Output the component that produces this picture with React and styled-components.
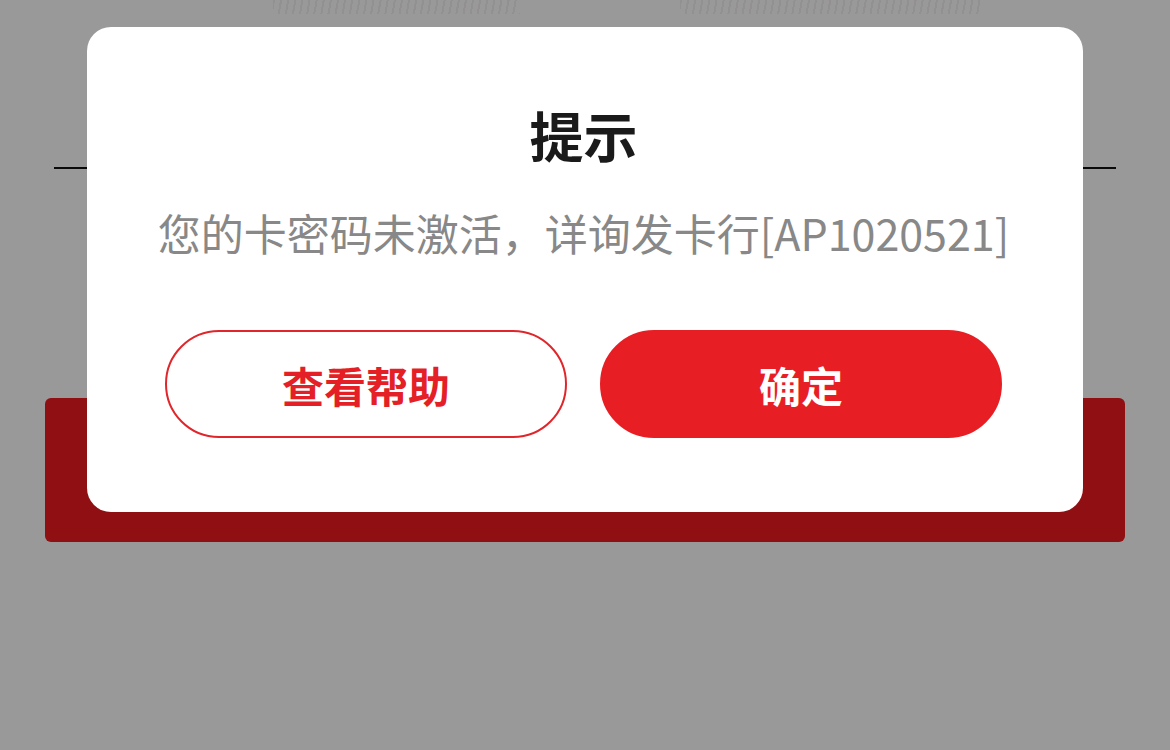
import React from 'react';
import styled, { createGlobalStyle } from 'styled-components';

const GlobalStyle = createGlobalStyle`
  html, body {
    margin: 0;
    padding: 0;
    background: #ffffff;
    font-family: "Noto Sans CJK SC", "Noto Sans", sans-serif;
  }
`;

// Page behind the dialog
const Page = styled.div`
  position: relative;
  width: 1170px;
  height: 750px;
  overflow: hidden;
  background: #ffffff;
`;

const HintStrip = styled.div`
  display: flex;
  justify-content: space-between;
  padding: 0 190px 0 273px;
  height: 14px;
`;

const Hatch = styled.div`
  width: ${p => p.$width}px;
  height: 14px;
  background: repeating-linear-gradient(
    100deg,
    rgba(150, 110, 110, 0.1) 0 2px,
    transparent 2px 7px
  );
`;

const Divider = styled.div`
  margin: 153px 54px 0;
  height: 2px;
  background: #111111;
`;

const BigButton = styled.div`
  margin: 229px 45px 0;
  height: 144px;
  border-radius: 6px;
  background: #ee1a21;
`;

const Mask = styled.div`
  position: absolute;
  inset: 0;
  background: rgba(0, 0, 0, 0.4);
`;

// Dialog
const Dialog = styled.div`
  position: absolute;
  top: 27px;
  left: 87px;
  width: 996px;
  box-sizing: border-box;
  padding: 81px 81px 74px 78px;
  background: #ffffff;
  border-radius: 24px;
  display: flex;
  flex-direction: column;
  align-items: center;
`;

const Title = styled.h2`
  margin: 0;
  font-size: 54px;
  line-height: 54px;
  font-weight: 700;
  color: #1a1a1a;
`;

const Message = styled.p`
  margin: 49px 0 0;
  font-size: 43px;
  line-height: 43px;
  color: #888888;
  white-space: nowrap;
`;

const Actions = styled.div`
  margin-top: 76px;
  width: 100%;
  display: grid;
  grid-template-columns: 1fr 1fr;
  gap: 33px;
`;

const ActionButton = styled.button`
  height: 108px;
  box-sizing: border-box;
  border-radius: 54px;
  border: 2.5px solid ${p => (p.$primary ? '#e81e25' : '#e0262b')};
  background: ${p => (p.$primary ? '#e81e25' : '#ffffff')};
  color: ${p => (p.$primary ? '#ffffff' : '#e41f26')};
  font-family: "Noto Sans CJK SC", "Noto Sans", sans-serif;
  font-size: 42px;
  font-weight: 700;
  display: flex;
  align-items: center;
  justify-content: center;
  padding: 0;
  cursor: pointer;
`;

export default function App() {
  return (
    <>
      <GlobalStyle />
      <Page>
        <HintStrip>
          <Hatch $width={247} />
          <Hatch $width={300} />
        </HintStrip>
        <Divider />
        <BigButton />
        <Mask />
        <Dialog>
          <Title>提示</Title>
          <Message>您的卡密码未激活，详询发卡行[AP1020521]</Message>
          <Actions>
            <ActionButton>查看帮助</ActionButton>
            <ActionButton $primary>确定</ActionButton>
          </Actions>
        </Dialog>
      </Page>
    </>
  );
}
